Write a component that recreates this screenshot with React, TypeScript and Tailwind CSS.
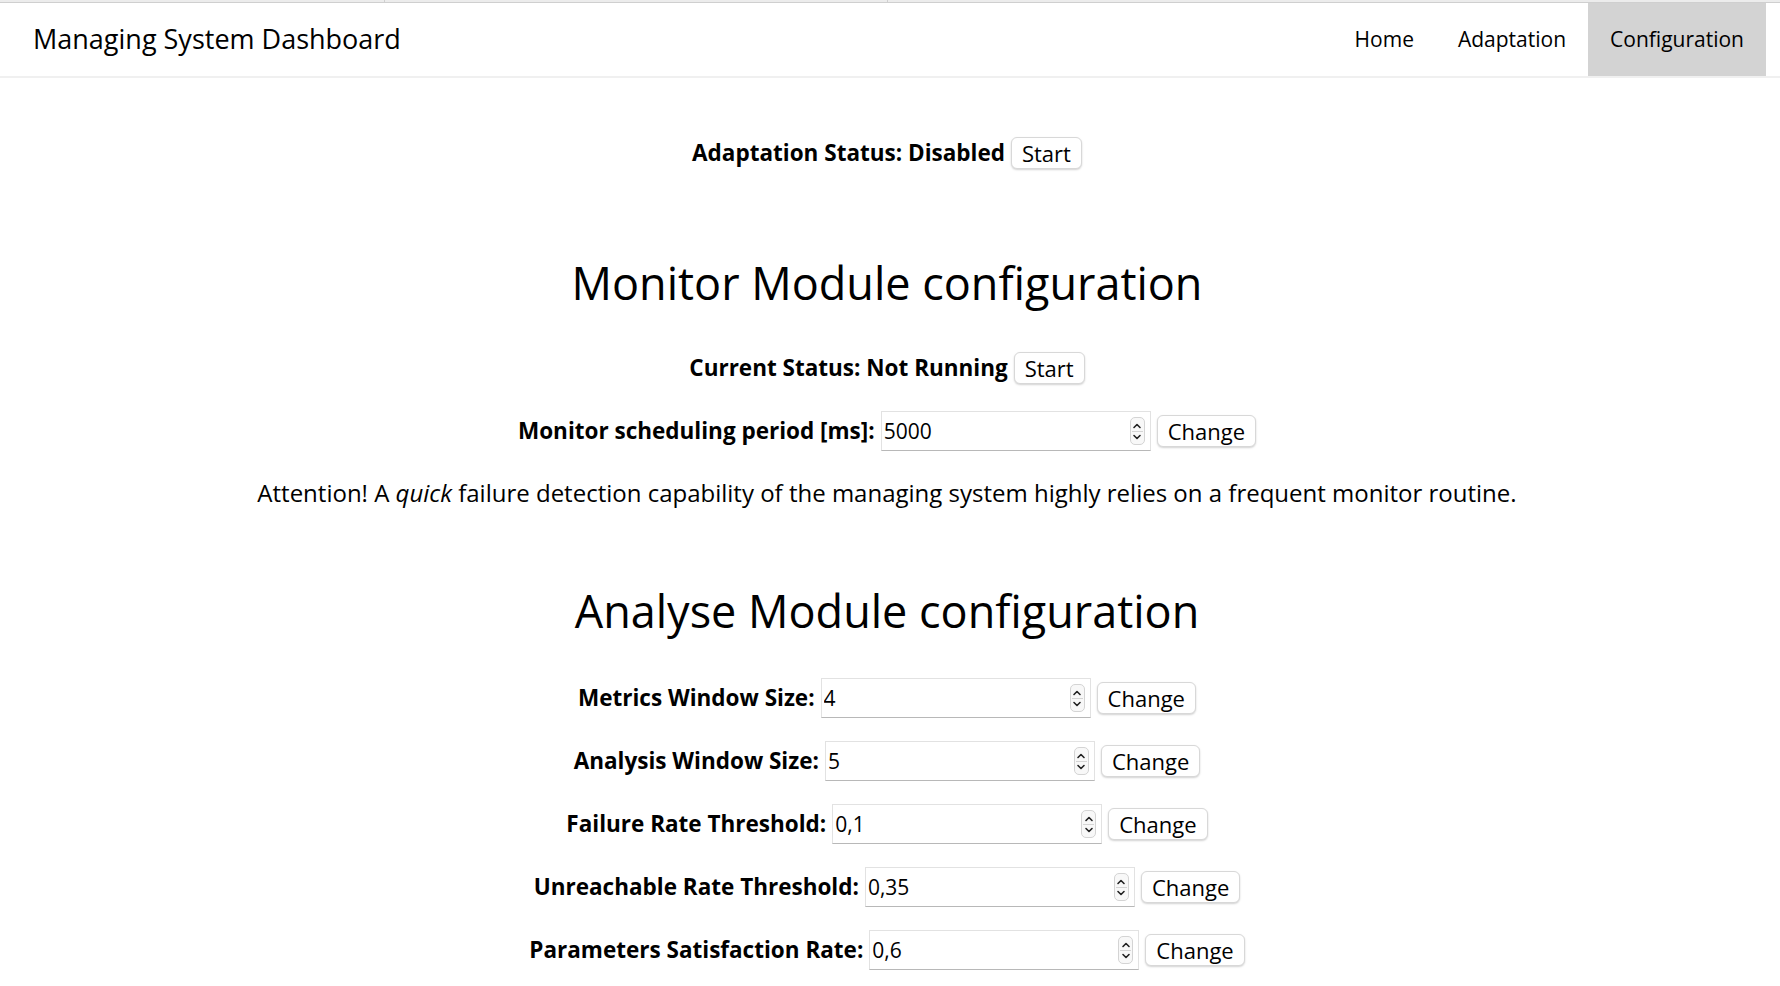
import React, { useState } from 'react';

const font = "font-['Open_Sans','Liberation_Sans',sans-serif]";

// small up/down stepper drawn like the browser's number spinner
const Spinner = () => (
  <div className="flex flex-col items-center justify-center w-[15px] h-[28px] rounded-[5px] border border-[#d4d4d4] bg-[#f8f8f8] mr-[5px]">
    <svg width="10" height="8" viewBox="0 0 10 8" className="mb-[1px]">
      <path d="M2 5.5 L5 2.5 L8 5.5" fill="none" stroke="#222" strokeWidth="1.6" strokeLinecap="round" strokeLinejoin="round" />
    </svg>
    <div className="w-[11px] h-px bg-[#d4d4d4]" />
    <svg width="10" height="8" viewBox="0 0 10 8" className="mt-[1px]">
      <path d="M2 2.5 L5 5.5 L8 2.5" fill="none" stroke="#222" strokeWidth="1.6" strokeLinecap="round" strokeLinejoin="round" />
    </svg>
  </div>
);

const Button: React.FC<{ children: React.ReactNode }> = ({ children }) => (
  <button className="h-[32px] px-[10px] bg-white border border-[#d8d8d8] rounded-[6px] shadow-[0_1px_2px_rgba(0,0,0,0.18)] text-[22px] leading-none text-black">
    {children}
  </button>
);

const NumberField: React.FC<{ label: string; value: string }> = ({ label, value }) => {
  const [val, setVal] = useState(value);
  return (
    <div className="flex items-center justify-center h-[40px]">
      <span className="font-bold text-[22.5px] text-black mr-[6px]">{label}</span>
      <div className="flex items-center w-[270px] h-[40px] border border-[#e2e2e2] border-b-[#b8b8b8] bg-white">
        <input
          value={val}
          onChange={(e) => setVal(e.target.value)}
          className="flex-1 min-w-0 h-full pl-[2px] text-[21px] text-black outline-none bg-transparent"
        />
        <Spinner />
      </div>
      <div className="ml-[6px]">
        <Button>Change</Button>
      </div>
    </div>
  );
};

const navItems = ['Home', 'Adaptation', 'Configuration'];

export default function App() {
  const [activeTab, setActiveTab] = useState('Configuration');

  const analyseFields = [
    { label: 'Metrics Window Size:', value: '4' },
    { label: 'Analysis Window Size:', value: '5' },
    { label: 'Failure Rate Threshold:', value: '0,1' },
    { label: 'Unreachable Rate Threshold:', value: '0,35' },
    { label: 'Parameters Satisfaction Rate:', value: '0,6' },
  ];

  return (
    <div className={`${font} min-h-screen bg-white text-black`}>
      {/* thin strip at the very top */}
      <div className="flex h-[3px] bg-[#ececec] border-b border-[#cfcfcf]">
        <div className="w-[384px]" />
        <div className="w-[503px] border-l border-[#cfcfcf]" />
        <div className="flex-1 border-l border-[#cfcfcf]" />
      </div>

      {/* Top Header */}
      <header className="flex items-stretch justify-between h-[75px] border-b-2 border-[#f0f0f0] pr-[14px]">
        <div className="flex items-center pl-[33px] text-[27px]">Managing System Dashboard</div>
        <nav className="flex items-stretch">
          {navItems.map((item) => (
            <button
              key={item}
              onClick={() => setActiveTab(item)}
              className={`px-[22px] text-[21px] ${activeTab === item ? 'bg-[#d3d3d3]' : 'bg-white'}`}
            >
              {item}
            </button>
          ))}
        </nav>
      </header>

      <main className="flex flex-col items-center pt-[55px] pr-[6px]">
        <div className="flex items-center justify-center h-[40px]">
          <span className="font-bold text-[22.5px] mr-[6px]">Adaptation Status: Disabled</span>
          <Button>Start</Button>
        </div>

        <h2 className="h-[60px] mt-[79px] flex items-center text-[45px] leading-none">Monitor Module configuration</h2>

        <div className="flex items-center justify-center h-[40px] mt-[36px]">
          <span className="font-bold text-[22.5px] mr-[6px]">Current Status: Not Running</span>
          <Button>Start</Button>
        </div>

        <div className="mt-[23px]">
          <NumberField label="Monitor scheduling period [ms]:" value="5000" />
        </div>

        <p className="h-[40px] mt-[22px] flex items-center text-[24px]">
          Attention! A&nbsp;<em>quick</em>&nbsp;failure detection capability of the managing system highly relies on a frequent monitor routine.
        </p>

        <h2 className="h-[60px] mt-[67px] flex items-center text-[45px] leading-none">Analyse Module configuration</h2>

        <div className="flex flex-col items-center gap-[23px] mt-[38px] pb-[40px]">
          {analyseFields.map((f) => (
            <NumberField key={f.label} label={f.label} value={f.value} />
          ))}
        </div>
      </main>
    </div>
  );
}
